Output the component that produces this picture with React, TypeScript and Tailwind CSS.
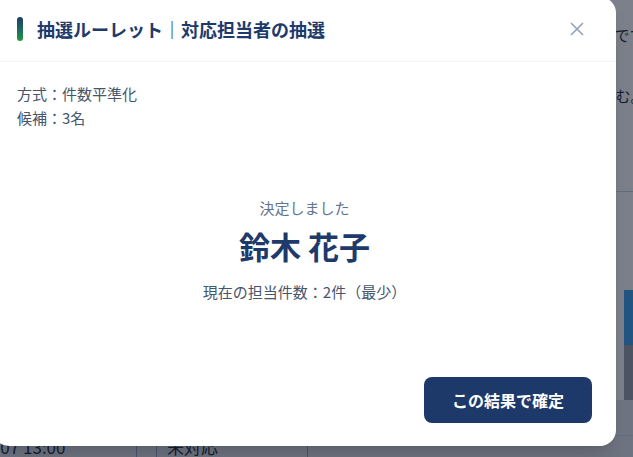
import { X } from "lucide-react";

const font = { fontFamily: '"Noto Sans CJK JP", "Noto Sans", sans-serif' };

function BackgroundPage() {
  return (
    <div className="flex h-full w-full flex-col bg-white text-[15px] text-slate-800">
      <div className="flex h-[192px] flex-col gap-[38px] border-b border-slate-300 pl-[46px] pt-[24px]">
        <p className="whitespace-nowrap">この画面では問い合わせの担当者を抽選で決定します。対象は現在対応可能な担当者です。</p>
        <p className="whitespace-nowrap">結果は確定ボタンを押すまで反映されません。やり直す場合は閉じてから再抽選へ進む。</p>
      </div>
      <div className="flex h-[208px] items-start justify-end pt-[98px]">
        <div className="flex w-[9px] flex-col">
          <div className="h-[55px] bg-[#3aa0ec]" />
          <div className="h-[55px] bg-[#9aa0aa]" />
        </div>
      </div>
      <div className="mt-auto flex h-[57px] items-end bg-[#e2e5ea]">
        <div className="flex h-[22px] w-full items-center border-t border-slate-300 text-[17px]">
          <div className="w-[136px] shrink-0 overflow-hidden whitespace-nowrap">
            <span className="-ml-[15px] inline-block">5-07 13:00</span>
          </div>
          <div className="h-full w-[21px] shrink-0 border-x border-slate-400" />
          <div className="w-[150px] shrink-0 pl-[10px]">未対応</div>
          <div className="h-full border-l border-slate-400" />
        </div>
      </div>
    </div>
  );
}

export default function App() {
  return (
    <div className="relative h-[457px] w-[633px] overflow-hidden" style={font}>
      <BackgroundPage />
      <div className="absolute inset-0 bg-[#0f172a]/55" />

      <div className="absolute left-[-7px] top-[-3px] flex h-[449px] w-[623px] flex-col rounded-2xl bg-white shadow-xl">
        <div className="flex h-[65px] items-center justify-between border-b border-slate-100 px-6">
          <div className="flex items-center gap-[14px]">
            <span className="h-6 w-[6px] rounded-full bg-gradient-to-b from-[#1e3a6b] to-[#22973f]" />
            <h2 className="text-[18px] font-bold text-[#1e3a6b]">抽選ルーレット｜対応担当者の抽選</h2>
          </div>
          <button className="p-1 text-slate-400">
            <X size={22} strokeWidth={1.8} />
          </button>
        </div>

        <div className="flex flex-1 flex-col px-6 pt-5 pb-[23px]">
          <div className="text-[15px] leading-6 text-slate-600">
            <p>方式：件数平準化</p>
            <p>候補：3名</p>
          </div>

          <div className="mt-[68px] flex flex-col items-center">
            <p className="text-[15px] leading-5 text-slate-500">決定しました</p>
            <p className="mt-[10px] text-[31px] font-bold leading-9 text-[#1e3a6b]">鈴木 花子</p>
            <p className="mt-[18px] text-[15px] leading-5 text-slate-600">現在の担当件数：2件（最少）</p>
          </div>

          <div className="mt-auto flex justify-end">
            <button className="h-[46px] w-[168px] rounded-lg bg-[#1d396a] text-[16px] font-bold text-white">
              この結果で確定
            </button>
          </div>
        </div>
      </div>
    </div>
  );
}
